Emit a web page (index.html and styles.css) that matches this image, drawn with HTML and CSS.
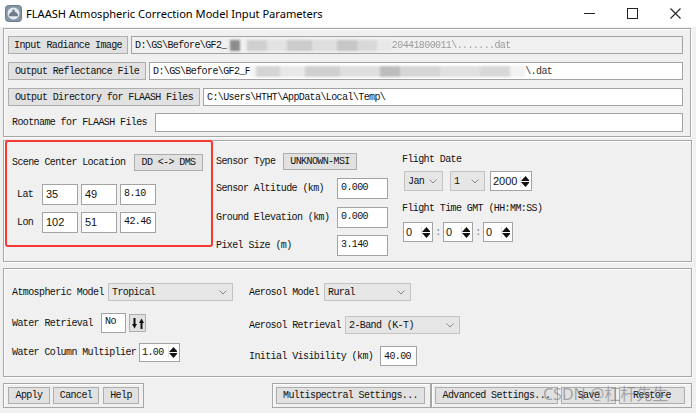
FILE: index.html
```html
<!DOCTYPE html>
<html>
<head>
<meta charset="utf-8">
<link rel="stylesheet" href="styles.css">
</head>
<body>
<div class="titlebar">
  <svg class="app-icon" width="17" height="17" viewBox="0 0 17 17"><rect x="0.5" y="0.5" width="16" height="16" rx="3" fill="#8595a4" stroke="#6d7c8a"/><circle cx="8.5" cy="8.5" r="6" fill="#e4eaef"/><path d="M3.8 11.2a4.7 4.7 0 0 1 9.4 0z" fill="#6c7c8c"/><circle cx="8.5" cy="5.8" r="1.3" fill="#6c7c8c"/></svg>
  <span class="title">FLAASH Atmospheric Correction Model Input Parameters</span>
  <div class="controls">
    <div class="ctrl"><svg width="11" height="11"><line x1="0" y1="5.5" x2="11" y2="5.5" stroke="#222" stroke-width="1"/></svg></div>
    <div class="ctrl"><svg width="11" height="11"><rect x="0.5" y="0.5" width="10" height="10" fill="none" stroke="#222"/></svg></div>
    <div class="ctrl"><svg width="11" height="11"><path d="M0.5 0.5L10.5 10.5M10.5 0.5L0.5 10.5" stroke="#222" stroke-width="1.1"/></svg></div>
  </div>
</div>

<section class="panel panel-top">
  <div class="file-row">
    <div class="btn w120">Input Radiance Image</div>
    <div class="field ro">D:\GS\Before\GF2_<span class="mosaic m1"></span><span class="faint">20441800011\.......dat</span></div>
  </div>
  <div class="file-row">
    <div class="btn w138">Output Reflectance File</div>
    <div class="field">D:\GS\Before\GF2_F<span class="mosaic m2"></span><span class="faint2">\.dat</span></div>
  </div>
  <div class="file-row row3">
    <div class="btn w192">Output Directory for FLAASH Files</div>
    <div class="field">C:\Users\HTHT\AppData\Local\Temp\</div>
  </div>
  <div class="file-row root">
    <div class="lbl root-lbl">Rootname for FLAASH Files</div>
    <div class="field"></div>
  </div>
</section>

<section class="panel panel-mid">
  <div class="col-scene">
    <div class="scene-row">
      <span class="lbl scene-lbl">Scene Center Location</span>
      <div class="btn w69 h17">DD &lt;-&gt; DMS</div>
    </div>
    <div class="coord-row lat">
      <span class="lbl coord-lbl">Lat</span>
      <div class="field num sans">35</div>
      <div class="field num sans">49</div>
      <div class="field num">8.10</div>
    </div>
    <div class="coord-row lon">
      <span class="lbl coord-lbl">Lon</span>
      <div class="field num sans">102</div>
      <div class="field num sans">51</div>
      <div class="field num">42.46</div>
    </div>
  </div>

  <div class="col-sensor">
    <div class="m-row first">
      <span class="lbl st-lbl">Sensor Type</span>
      <div class="btn w74 h17">UNKNOWN-MSI</div>
    </div>
    <div class="m-row">
      <span class="lbl sv-lbl">Sensor Altitude (km)</span>
      <div class="field val">0.000</div>
    </div>
    <div class="m-row">
      <span class="lbl sv-lbl">Ground Elevation (km)</span>
      <div class="field val">0.000</div>
    </div>
    <div class="m-row last">
      <span class="lbl sv-lbl">Pixel Size (m)</span>
      <div class="field val">3.140</div>
    </div>
  </div>

  <div class="col-flight">
    <div class="lbl f-lbl">Flight Date</div>
    <div class="date-row">
      <div class="combo w39"><span>Jan</span><svg class="chev" width="8" height="5"><polyline points="0.5,0.5 4,4 7.5,0.5" fill="none" stroke="#888"/></svg></div>
      <div class="combo w35"><span>1</span><svg class="chev" width="8" height="5"><polyline points="0.5,0.5 4,4 7.5,0.5" fill="none" stroke="#888"/></svg></div>
      <div class="spin w42"><span class="sans">2000</span><svg class="arrows" width="9" height="11"><path d="M0 5L4.5 0L9 5zM0 6L4.5 11L9 6z" fill="#111"/></svg></div>
    </div>
    <div class="lbl f-lbl time-lbl">Flight Time GMT (HH:MM:SS)</div>
    <div class="time-row">
      <div class="spin w30"><span class="sans">0</span><svg class="arrows" width="9" height="11"><path d="M0 5L4.5 0L9 5zM0 6L4.5 11L9 6z" fill="#111"/></svg></div>
      <span class="colon">:</span>
      <div class="spin w30"><span class="sans">0</span><svg class="arrows" width="9" height="11"><path d="M0 5L4.5 0L9 5zM0 6L4.5 11L9 6z" fill="#111"/></svg></div>
      <span class="colon">:</span>
      <div class="spin w30"><span class="sans">0</span><svg class="arrows" width="9" height="11"><path d="M0 5L4.5 0L9 5zM0 6L4.5 11L9 6z" fill="#111"/></svg></div>
    </div>
  </div>
</section>

<section class="panel panel-bot">
  <div class="col-atm">
    <div class="b-row r1">
      <span class="lbl l96">Atmospheric Model</span>
      <div class="combo w125"><span>Tropical</span><svg class="chev" width="8" height="5"><polyline points="0.5,0.5 4,4 7.5,0.5" fill="none" stroke="#888"/></svg></div>
    </div>
    <div class="b-row r2">
      <span class="lbl l89">Water Retrieval</span>
      <div class="field box25">No</div>
      <div class="btn toggle"><svg width="12" height="11" viewBox="0 0 12 11"><path d="M1.5 0h2v6h1.5l-2.5 4.5-2.5-4.5h1.5z" fill="#111"/><path d="M8.5 11h2v-6h1.5l-2.5-4.5-2.5 4.5h1.5z" fill="#111"/></svg></div>
    </div>
    <div class="b-row r3">
      <span class="lbl l127">Water Column Multiplier</span>
      <div class="spin w41"><span>1.00</span><svg class="arrows" width="9" height="11"><path d="M0 5L4.5 0L9 5zM0 6L4.5 11L9 6z" fill="#111"/></svg></div>
    </div>
  </div>
  <div class="col-aer">
    <div class="b-row r1">
      <span class="lbl l75">Aerosol Model</span>
      <div class="combo w87"><span>Rural</span><svg class="chev" width="8" height="5"><polyline points="0.5,0.5 4,4 7.5,0.5" fill="none" stroke="#888"/></svg></div>
    </div>
    <div class="b-row ar2">
      <span class="lbl l96">Aerosol Retrieval</span>
      <div class="combo w115"><span>2-Band (K-T)</span><svg class="chev" width="8" height="5"><polyline points="0.5,0.5 4,4 7.5,0.5" fill="none" stroke="#888"/></svg></div>
    </div>
    <div class="b-row ar3">
      <span class="lbl l131">Initial Visibility (km)</span>
      <div class="field vis">40.00</div>
    </div>
  </div>
</section>

<div class="bar">
  <div class="group g1">
    <div class="btn w42 h17">Apply</div>
    <div class="btn w46 h17">Cancel</div>
    <div class="btn w36 h17 help">Help</div>
  </div>
  <div class="group g2">
    <div class="btn w149 h17">Multispectral Settings...</div>
  </div>
  <div class="group g3">
    <div class="btn w123 h17">Advanced Settings...</div>
    <div class="btn w55 h17">Save</div>
    <div class="btn w66 h17">Restore</div>
  </div>
</div>

<div class="redbox"></div>
<div class="watermark">CSDN @杠杆先生</div>
</body>
</html>
```
FILE: styles.css
```css
* { box-sizing: border-box; margin: 0; padding: 0; }
html, body { width: 696px; height: 413px; overflow: hidden; }
body {
  background: #f0f0f0;
  font-family: "Liberation Mono", monospace;
  font-size: 10px;
  letter-spacing: -0.6px;
  color: #111;
  position: relative;
}
.sans { font-family: "Liberation Sans", Arial, sans-serif; font-size: 11px; letter-spacing: 0; }

/* title bar */
.titlebar { height: 27px; background: #fff; display: flex; align-items: center; padding-left: 5px; }
.app-icon { margin-right: 4px; flex: none; }
.title { font-family: "Noto Sans", sans-serif; font-size: 11.1px; letter-spacing: 0; color: #000; }
.controls { margin-left: auto; display: flex; margin-right: -1px; }
.ctrl { width: 43px; height: 27px; display: flex; align-items: center; justify-content: center; }

/* panels */
.panel {
  border: 1px solid #a6a6a6;
  box-shadow: inset 1px 1px 0 #fff, 1px 1px 0 #fff;
  margin-left: 3px;
}
.panel-top { margin-top: 1px; width: 688px; height: 109px; padding: 7px 7px 0 4px; }
.panel-mid { margin-top: 3px; width: 689px; height: 122px; padding: 12px 0 0 8px; display: flex; }
.panel-bot { margin-top: 6px; width: 689px; height: 109px; padding: 14px 0 0 8px; display: flex; }

/* generic controls */
.btn {
  background: #e1e1e1;
  border: 1px solid #adadad;
  display: flex; align-items: center; justify-content: center;
  white-space: nowrap; flex: none;
}
.field {
  background: #fff;
  border: 1px solid #a3a3a3;
  padding-left: 3px;
  display: flex; align-items: center;
  white-space: nowrap; overflow: hidden;
}
.field.ro { background: #f0f0f0; }
.lbl { white-space: nowrap; flex: none; }
.combo {
  background: #e6e6e6;
  border: 1px solid #c2c2c2;
  display: flex; align-items: center; justify-content: space-between;
  padding: 0 5px 0 3px; flex: none;
}
.spin {
  background: #fff;
  border: 1px solid #a3a3a3;
  display: flex; align-items: center; justify-content: space-between;
  padding: 0 2px 0 2px; flex: none;
}
.spin .arrows { border-left: 1px solid #e6e6e6; padding-left: 0; }

.w30 { width: 30px; } .w35 { width: 35px; } .w36 { width: 36px; } .w39 { width: 39px; }
.w41 { width: 41px; } .w42 { width: 42px; } .w46 { width: 46px; } .w55 { width: 55px; }
.w66 { width: 66px; } .w69 { width: 69px; } .w74 { width: 74px; } .w87 { width: 87px; }
.w115 { width: 115px; } .w120 { width: 120px; } .w123 { width: 123px; } .w125 { width: 125px; }
.w138 { width: 138px; } .w149 { width: 149px; } .w192 { width: 192px; }
.h17 { height: 17px; }

/* top panel rows */
.file-row { display: flex; height: 18px; gap: 3px; margin-bottom: 8px; }
.file-row .field { flex: 1; }
.file-row.row3 { margin-bottom: 7px; }
.file-row.root { height: 19px; }
.root-lbl { width: 144px; padding-left: 4px; display: flex; align-items: center; }

.mosaic { display: inline-block; height: 11px; filter: blur(1.2px); }
.m1 {
  width: 165px;
  background: linear-gradient(90deg, #f0f0f0 0 3px, #8c8c8c 3px 13px, #f0f0f0 13px 20px, #cfcfcf 20px 40px, #e2e2e2 40px 60px, #cbcbcb 60px 85px, #dedede 85px 110px, #c6c6c6 110px 130px, #d8d8d8 130px 150px, #e8e8e8 150px);
}
.m2 {
  width: 275px;
  background: linear-gradient(90deg, #f4f4f4 0 6px, #d4d4d4 6px 30px, #e8e8e8 30px 55px, #d0d0d0 55px 90px, #dedede 90px 130px, #bdbdbd 130px 150px, #d6d6d6 150px 190px, #e0e0e0 190px 230px, #d8d8d8 230px 260px, #f2f2f2 260px);
}
.faint { color: #9a9a9a; filter: blur(0.5px); }
.faint2 { color: #333; }

/* middle panel */
.col-scene { width: 204px; flex: none; }
.scene-row { display: flex; align-items: center; height: 17px; margin-top: 1px; }
.scene-lbl { width: 122px; }
.coord-row { display: flex; gap: 3px; height: 21px; padding-left: 5px; align-items: stretch; }
.coord-row.lat { margin-top: 13px; }
.coord-row.lon { margin-top: 7px; }
.coord-lbl { width: 22px; display: flex; align-items: center; }
.coord-row .field { width: 36px; align-items: flex-start; padding-top: 3px; }

.col-sensor { width: 186px; flex: none; }
.m-row { display: flex; align-items: center; height: 21px; margin-top: 8px; }
.m-row.first { height: 17px; margin-top: 0; }
.m-row.last { margin-top: 7px; }
.st-lbl { width: 67px; }
.sv-lbl { width: 121px; }
.field.val { width: 51px; height: 21px; align-items: flex-start; padding-top: 3px; }

.col-flight { flex: 1; }
.f-lbl { height: 13px; line-height: 13px; }
.date-row { display: flex; height: 20px; margin-top: 5px; margin-left: 2px; }
.date-row .w35 { margin-left: 7px; }
.date-row .spin { margin-left: 5px; }
.time-lbl { margin-top: 11px; }
.time-row { display: flex; height: 20px; margin-top: 7px; margin-left: 1px; align-items: stretch; }
.colon { width: 10px; text-align: center; display: flex; align-items: center; justify-content: center; color: #777; }

/* bottom panel */
.col-atm { width: 237px; flex: none; }
.col-aer { flex: 1; }
.b-row { display: flex; align-items: center; }
.b-row.r1 { height: 18px; }
.b-row.r1 .combo { height: 18px; }
.b-row.r2 { height: 20px; margin-top: 12px; }
.b-row.r3 { height: 19px; margin-top: 10px; }
.b-row.r3 .spin { height: 19px; }
.b-row.ar2 { height: 18px; margin-top: 15px; }
.b-row.ar2 .combo { height: 18px; }
.b-row.ar3 { height: 20px; margin-top: 12px; }
.l75 { width: 75px; } .l89 { width: 89px; } .l96 { width: 96px; } .l127 { width: 127px; } .l131 { width: 131px; }
.box25 { width: 25px; height: 20px; align-items: flex-start; padding-top: 2px; }
.toggle { width: 17px; height: 18px; margin-left: 3px; }
.field.vis { width: 37px; height: 20px; }

/* bottom bar */
.bar { display: flex; height: 25px; margin-top: 6px; padding: 0 4px 0 3px; }
.group {
  border: 1px solid #a6a6a6;
  box-shadow: inset 1px 1px 0 #fff;
  display: flex; align-items: center;
  padding-left: 3px; gap: 3px;
}
.g1 { width: 141px; padding-left: 4px; }
.g1 .help { margin-left: 1px; }
.g2 { width: 159px; margin-left: auto; }
.g3 { width: 261px; }

/* annotations */
.redbox {
  position: absolute; left: 5px; top: 140px; width: 208px; height: 107px;
  border: 2px solid #f23a32; border-radius: 3px;
}
.watermark {
  position: absolute; left: 543px; top: 381px;
  font-family: "Noto Sans", "Noto Sans CJK SC", sans-serif;
  font-size: 16px; letter-spacing: 0;
  color: rgba(110, 110, 110, 0.55);
  pointer-events: none;
}
```
